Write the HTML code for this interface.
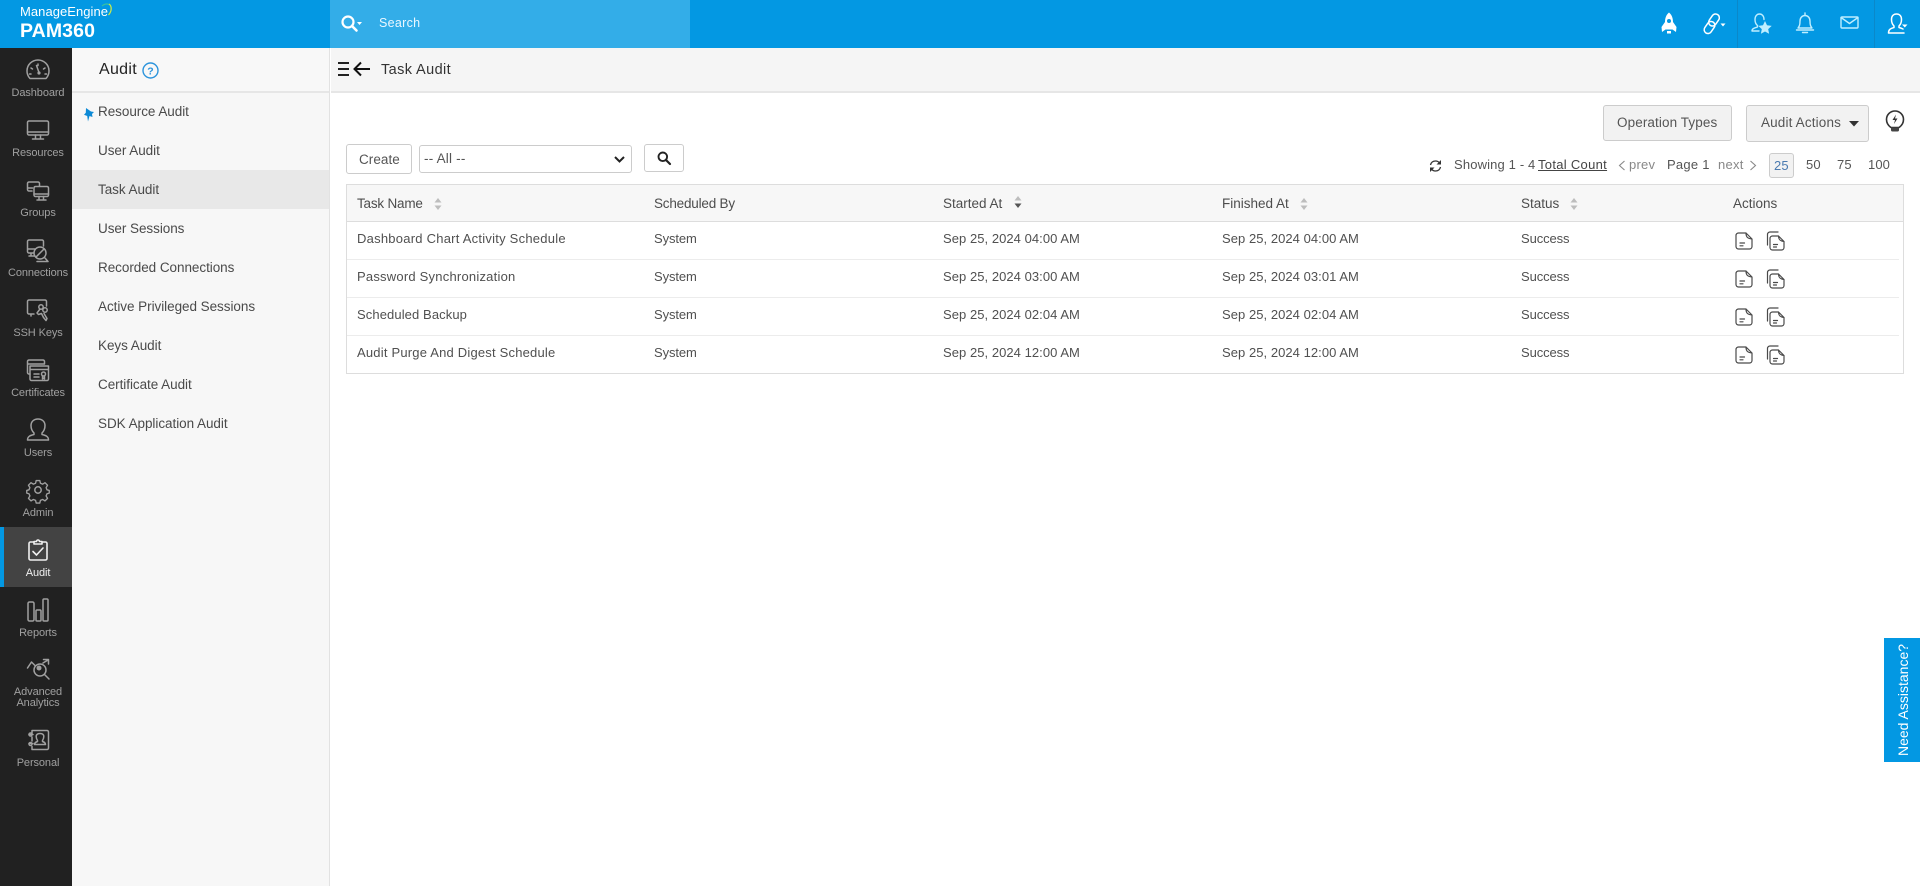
<!DOCTYPE html>
<html><head><meta charset="utf-8"><title>Task Audit - PAM360</title>
<style>
*{box-sizing:border-box}
html,body{margin:0;padding:0;width:1920px;height:886px;overflow:hidden;background:#fff;font-family:"Liberation Sans",sans-serif;color:#444}
.a{position:absolute}
.t{position:absolute;white-space:nowrap;line-height:20px;height:20px;font-size:13.5px;letter-spacing:.2px;color:#4a4a4a}
svg{position:absolute;overflow:visible}
#top{left:0;top:0;width:1920px;height:48px;background:#0398e3}
#srch{left:330px;top:0;width:360px;height:48px;background:#33ade8}
#rail{left:0;top:48px;width:72px;height:838px;background:#212121}
#act{left:0;top:527px;width:72px;height:60px;background:#434343;border-left:4px solid #0398e3}
#sub{left:72px;top:48px;width:258px;height:838px;background:#f7f7f7;border-right:1px solid #e2e2e2}
#subh{left:72px;top:48px;width:257px;height:45px;border-bottom:2px solid #e6e6e6;background:#f8f8f8}
#sel{left:72px;top:170px;width:257px;height:39px;background:#e8e8e8}
#bar{left:331px;top:48px;width:1589px;height:45px;background:#f5f5f5;border-bottom:2px solid #e6e6e6}
.rl{position:absolute;left:4px;width:68px;text-align:center;font-size:11px;letter-spacing:-.1px;line-height:12px;color:#a0a0a0}
.m{left:98px;font-size:13.5px;letter-spacing:-.05px;color:#4a4a4a}
.btn{position:absolute;background:#f2f2f2;border:1px solid #ccc;border-radius:3px}
.wb{position:absolute;background:#fff;border:1px solid #ccc;border-radius:3px}
#tbl{left:346px;top:184px;width:1558px;height:190px;border:1px solid #ddd;border-top:1px solid #ddd}
#th{left:347px;top:185px;width:1556px;height:37px;background:#f7f7f7;border-bottom:1px solid #ddd}
.l{position:absolute;left:347px;width:1552px;height:1px;background:#ececec}
.h{color:#4d4d4d;letter-spacing:0}
.r{letter-spacing:.28px;font-size:13px;color:#505050}
.d{letter-spacing:.05px}
.s{letter-spacing:-.1px}
#na{left:1884px;top:638px;width:36px;height:124px;background:#0398e3}
#nat{position:absolute;left:1903px;top:700px;width:124px;height:20px;margin:-10px 0 0 -62px;transform:rotate(-90deg);text-align:center;color:#fff;font-size:14px;line-height:20px;white-space:nowrap}
.ri{fill:none;stroke:#a0a0a0;stroke-width:1.5;stroke-linecap:round;stroke-linejoin:round}
.wi{fill:none;stroke:#fff;stroke-width:1.5;stroke-linecap:round;stroke-linejoin:round}
.ci{fill:none;stroke:#bfeeff;stroke-width:1.4;stroke-linecap:round;stroke-linejoin:round}
</style></head><body>
<svg width="0" height="0" style="position:absolute"><defs>
<symbol id="doc" viewBox="0 0 18 18"><path d="M3.500 1h7.500l6 6v7.500a2.500 2.500 0 0 1-2.500 2.500h-11A2.500 2.500 0 0 1 1 14.500v-11A2.500 2.500 0 0 1 3.500 1zM11 1c0 3.500 1 5.500 6 6M5 11h4.500M5 13.800h3" fill="none" stroke="#4a4a4a" stroke-width="1.200" stroke-linecap="round" stroke-linejoin="round"/></symbol>
<symbol id="doc2" viewBox="0 0 20 20"><path d="M6.500 5h6l5.500 5.500v6a2.500 2.500 0 0 1-2.500 2.500h-9A2.500 2.500 0 0 1 4 16.500V7.500A2.500 2.500 0 0 1 6.500 5zM12.500 5c0 3 1 5 5.500 5.500M7.500 13.500h4M7.500 16h3M1.500 14V3.500A2.500 2.500 0 0 1 4 1h8" fill="none" stroke="#4a4a4a" stroke-width="1.200" stroke-linecap="round" stroke-linejoin="round"/></symbol>
<symbol id="sort" viewBox="0 0 8 12"><path d="M4 0l3.500 4.500h-7zM4 12l3.500-4.500h-7z" fill="#bdbdbd"/></symbol>
</defs></svg>

<div id="top" class="a"></div>
<div id="srch" class="a"></div>
<div class="t" style="left:20px;top:2px;color:#fff;font-size:13px;letter-spacing:.05px">ManageEngine</div>
<div class="t" style="left:20px;top:21px;color:#fff;font-size:19.500px;font-weight:bold;letter-spacing:.1px">PAM360</div>
<svg style="left:100px;top:3px" width="16" height="14" viewBox="0 0 16 14"><path d="M2 3C4 1 7 .5 9 1.500" fill="none" stroke="#39c1a0" stroke-width="1.200"/><path d="M9 1c3 2 3 7-.5 11" fill="none" stroke="#c9ea4b" stroke-width="1.300"/></svg>
<svg style="left:340px;top:14px" width="24" height="20" viewBox="0 0 24 20"><circle cx="8" cy="8" r="5.500" fill="none" stroke="#fff" stroke-width="2.200"/><path d="M12 12l4.500 4.500" stroke="#fff" stroke-width="2.600" stroke-linecap="round"/><path d="M17 8h5l-2.500 3z" fill="#fff"/></svg>
<div class="t" style="left:379px;top:13px;color:#eaf7ff;font-size:12.500px;letter-spacing:.3px">Search</div>

<!-- top icons -->
<svg style="left:1659px;top:12px" width="20" height="22" viewBox="0 0 20 22"><path d="M10 .5c3 2.500 4 6 4 9.500l3.500 5-.5 5-3.500-2.500h-7L3 20l-.5-5L6 10c0-3.500 1-7 4-9.500z" fill="#fff"/><circle cx="10" cy="9" r="2" fill="#0398e3"/><path d="M8 19h4v2.500H8z" fill="#fff"/></svg>
<svg style="left:1703px;top:13px" width="24" height="22" viewBox="0 0 24 22"><g class="wi" stroke-width="1.700"><rect x="-3.800" y="-6.500" width="7.600" height="13" rx="3.800" transform="translate(6.500 14.500) rotate(35)"/><rect x="-3.800" y="-6.500" width="7.600" height="13" rx="3.800" transform="translate(11 7) rotate(35)"/></g><path d="M17.500 10.500h5l-2.500 3z" fill="#fff"/></svg>
<div class="a" style="left:1737px;top:0;width:1px;height:48px;background:#0b88c9"></div>
<svg style="left:1750px;top:13px" width="22" height="22" viewBox="0 0 22 22"><g class="ci"><path d="M7.500 12.500C5.500 11 5 8.500 5 6.500 5 3 7 1 9.500 1S14 3 14 6.500M7.500 12.500v1.500C4.500 15 2 15.500 2 18h7"/></g><path d="M15 8l2 4.300 4.700.6-3.500 3.200.9 4.700-4.100-2.300-4.100 2.300.9-4.700-3.500-3.200 4.700-.6z" fill="#bfeeff"/></svg>
<svg style="left:1795px;top:12px" width="20" height="22" viewBox="0 0 20 22"><g class="ci"><path d="M3 16c1.500-2 2-3 2-7 0-3 2-5.500 5-5.500S15 6 15 9c0 4 .5 5 2 7zM10 1v2.500M1.500 18h17M7.500 20.500h5"/></g></svg>
<svg style="left:1840px;top:15px" width="20" height="16" viewBox="0 0 20 16"><g class="ci"><rect x="1" y="2" width="17" height="11" rx="1"/><path d="M1 2.500l8.500 6 8.500-6"/></g></svg>
<div class="a" style="left:1874px;top:0;width:1px;height:48px;background:#0b88c9"></div>
<svg style="left:1887px;top:13px" width="24" height="22" viewBox="0 0 24 22"><g class="wi" stroke-width="1.700"><path d="M7 13C5 11 4.500 8.500 4.500 6.500 4.500 3 6.500 1 9.500 1s5 2 5 5.500c0 2-.5 4.500-2.500 6.500v1.500c2 .5 3 1 4 1.500M7 13v1.500C4 15.500 1.500 16 1.500 20H17"/></g><path d="M15 11.500h5.500l-2.700 3z" fill="#fff"/></svg>

<!-- rail -->
<div id="rail" class="a"></div>
<div id="act" class="a"></div>
<div class="rl" style="top:87px">Dashboard</div>
<div class="rl" style="top:147px">Resources</div>
<div class="rl" style="top:207px">Groups</div>
<div class="rl" style="top:267px">Connections</div>
<div class="rl" style="top:327px">SSH Keys</div>
<div class="rl" style="top:387px">Certificates</div>
<div class="rl" style="top:447px">Users</div>
<div class="rl" style="top:507px">Admin</div>
<div class="rl" style="top:567px;color:#f0f0f0">Audit</div>
<div class="rl" style="top:627px">Reports</div>
<div class="rl" style="top:687px;line-height:10.500px">Advanced<br>Analytics</div>
<div class="rl" style="top:757px">Personal</div>

<svg style="left:26px;top:60px" width="24" height="20" viewBox="0 0 24 20"><g class="ri"><path d="M4 18.500a11 11 0 1 1 16 0z"/><path d="M12 4v1.500M5 8l1.500 1M19 8l-1.500 1M3.500 14H5M20.500 14H19M10.500 5.500l2.500 7"/></g><circle cx="13" cy="13" r="1.600" fill="#a0a0a0"/></svg>
<svg style="left:26px;top:120px" width="24" height="20" viewBox="0 0 24 20"><g class="ri"><rect x="1.500" y="1" width="21" height="14" rx="1.500"/><path d="M1.500 12h21M9.500 15v3.500M14.500 15v3.500M6.500 19h11"/></g></svg>
<svg style="left:26px;top:180px" width="24" height="22" viewBox="0 0 24 22"><g class="ri"><path d="M6 11H3a1.500 1.500 0 0 1-1.500-1.500v-6A1.500 1.500 0 0 1 3 2h9a1.500 1.500 0 0 1 1.500 1.500V6M1.500 8h5"/><rect x="8" y="6.500" width="14.500" height="10" rx="1.500"/><path d="M8 14h14.500M13 16.500v3M17.500 16.500v3M11 20h9"/></g></svg>
<svg style="left:26px;top:238px" width="24" height="24" viewBox="0 0 24 24"><g class="ri"><path d="M8 15H3a1.500 1.500 0 0 1-1.500-1.500v-10A1.500 1.500 0 0 1 3 2h13a1.500 1.500 0 0 1 1.500 1.500V8M1.500 11H9M5 15v2.500M3 18h6"/><circle cx="14" cy="15" r="6"/><path d="M10 19L18 11M19 20l3 3.500H11"/></g></svg>
<svg style="left:26px;top:298px" width="24" height="24" viewBox="0 0 24 24"><g class="ri"><path d="M8 16H3a1.500 1.500 0 0 1-1.500-1.500v-11A1.500 1.500 0 0 1 3 2h16a1.500 1.500 0 0 1 1.500 1.500V8M5 16v2"/><circle cx="15" cy="9" r="2.200"/><circle cx="19" cy="12" r="2.200"/><path d="M14 11l-3 4 1.500 1.500 3-1 2 4 2.500 3 1-2-3-5"/></g></svg>
<svg style="left:26px;top:358px" width="24" height="24" viewBox="0 0 24 24"><g class="ri"><path d="M4 16H3a1.500 1.500 0 0 1-1.500-1.500v-11A1.500 1.500 0 0 1 3 2h14a1.500 1.500 0 0 1 1.500 1.500V6M1.500 6h17"/><path d="M4 8h18.500v13a1.500 1.500 0 0 1-1.500 1.500H5.500A1.500 1.500 0 0 1 4 21zM4 11.500h18.500M8 16h5M8 19h5"/><circle cx="17.500" cy="16" r="2"/><path d="M16.500 18v3l1-1 1 1v-3"/></g></svg>
<svg style="left:26px;top:418px" width="24" height="24" viewBox="0 0 24 24"><g class="ri" stroke-width="1.700"><path d="M8 15c-2-2-3-5-3-7.500C5 3.500 8 1 12 1s7 2.500 7 6.500c0 2.500-1 5.500-3 7.500v1.500c4 1 6.500 2 6.500 5.500h-21c0-3.500 2.500-4.500 6.500-5.500z"/></g></svg>
<svg style="left:26px;top:478px" width="24" height="24" viewBox="0 0 24 24"><g class="ri"><circle cx="12" cy="12" r="3.200"/><path d="M10 1.500h4l.7 3 2.400 1 2.700-1.600 2.800 2.800-1.600 2.700 1 2.400 2.500.7v3l-2.500.7-1 2.400 1.600 2.700-2.800 2.800-2.700-1.600-2.400 1-.7 3h-4l-.7-3-2.400-1-2.700 1.600-2.800-2.800 1.600-2.700-1-2.400-2.500-.7v-3l2.500-.7 1-2.400-1.600-2.700 2.800-2.800 2.700 1.600 2.400-1z" transform="translate(1.200 1.200) scale(.9)"/></g></svg>
<svg style="left:28px;top:538px" width="20" height="24" viewBox="0 0 20 24"><g fill="none" stroke="#f0f0f0" stroke-width="1.600" stroke-linecap="round" stroke-linejoin="round"><path d="M6 4H2.500A1.500 1.500 0 0 0 1 5.500v15A1.500 1.500 0 0 0 2.500 22h15a1.500 1.500 0 0 0 1.500-1.500v-15A1.500 1.500 0 0 0 17.500 4H14M6 6V3.500h2.500a1.500 1.500 0 0 1 3 0H14V6zM5 13.500l3.500 3.500L15 10"/></g></svg>
<svg style="left:26px;top:598px" width="24" height="24" viewBox="0 0 24 24"><g class="ri"><rect x="2" y="4" width="6" height="19" rx="1.500"/><rect x="10" y="12" width="5" height="11" rx="1"/><rect x="17" y="1" width="5" height="22" rx="1"/></g></svg>
<svg style="left:26px;top:658px" width="24" height="24" viewBox="0 0 24 24"><g class="ri" stroke-width="1.700"><path d="M1.500 10L5.500 4l3.500 3.500M17 5l5-3M17.500 1.500H22.500V6"/><circle cx="14" cy="12" r="6"/><path d="M18.500 16.500l4.500 4.500"/></g><circle cx="13" cy="10" r="2.500" fill="#a0a0a0"/></svg>
<svg style="left:28px;top:729px" width="22" height="22" viewBox="0 0 22 22"><g class="ri"><path d="M4 1.500h15a1.500 1.500 0 0 1 1.500 1.500v16a1.500 1.500 0 0 1-1.500 1.500H4v-3M4 12V8M4 4.500v-3"/><path d="M1 5.500h4M1 14.500h4"/><circle cx="2.500" cy="5.500" r="1.500"/><circle cx="2.500" cy="15" r="1.500"/><path d="M9.500 11.500c-1-1.500-1.300-3-1.300-4C8.200 5.500 9.500 4.500 12 4.500s3.800 1 3.800 3c0 1-.3 2.500-1.300 4v1c1.500.5 3 1 3 3h-11c0-2 1.500-2.500 3-3z"/></g></svg>

<!-- sub panel -->
<div id="sub" class="a"></div>
<div id="subh" class="a"></div>
<div id="sel" class="a"></div>
<div class="t" style="left:99px;top:60px;font-size:16px;color:#222;letter-spacing:.3px">Audit</div>
<svg style="left:142px;top:62px" width="17" height="17" viewBox="0 0 17 17"><circle cx="8.500" cy="8.500" r="7.500" fill="none" stroke="#2c94dc" stroke-width="1.400"/><text x="8.500" y="12.300" text-anchor="middle" font-family="Liberation Sans" font-weight="bold" font-size="10.500" fill="#2c94dc">?</text></svg>
<svg style="left:83px;top:108px" width="11" height="14" viewBox="0 0 11 14"><path d="M3 0l5 3.500 3 .5-2 2 .5 3-3-1L5 13.500 4.200 8 1 6.800l1.800-2z" fill="#0e8ad6"/></svg>
<div class="t m" style="top:102px">Resource Audit</div>
<div class="t m" style="top:141px">User Audit</div>
<div class="t m" style="top:180px">Task Audit</div>
<div class="t m" style="top:219px">User Sessions</div>
<div class="t m" style="top:258px">Recorded Connections</div>
<div class="t m" style="top:297px">Active Privileged Sessions</div>
<div class="t m" style="top:336px">Keys Audit</div>
<div class="t m" style="top:375px">Certificate Audit</div>
<div class="t m" style="top:414px">SDK Application Audit</div>

<!-- title bar -->
<div id="bar" class="a"></div>
<svg style="left:337px;top:60px" width="36" height="18" viewBox="0 0 36 18"><path d="M1 3h11M1 9h11M1 15h11" stroke="#222" stroke-width="2"/><path d="M18 9h15M24 2.500L17.500 9l6.500 6.500" fill="none" stroke="#111" stroke-width="2"/></svg>
<div class="t" style="left:381px;top:60px;font-size:14.500px;letter-spacing:.4px;color:#333">Task Audit</div>

<!-- buttons -->
<div class="btn" style="left:1603px;top:105px;width:129px;height:36px"></div>
<div class="t" style="left:1617px;top:113px;letter-spacing:.1px;color:#555">Operation Types</div>
<div class="btn" style="left:1746px;top:105px;width:123px;height:37px"></div>
<div class="t" style="left:1761px;top:113px;letter-spacing:.15px;color:#555">Audit Actions</div>
<svg style="left:1849px;top:121px" width="10" height="6" viewBox="0 0 10 6"><path d="M0 0h10L5 5.500z" fill="#333"/></svg>
<svg style="left:1885px;top:109px" width="20" height="23" viewBox="0 0 20 23"><path d="M6 18.500C3.500 16.800 1.500 14.500 1.500 10.500a8.500 8.500 0 0 1 17 0c0 4-2 6.300-4.500 8z" fill="none" stroke="#333" stroke-width="1.600"/><path d="M6 18.500h8V21a1.500 1.500 0 0 1-1.500 1.500h-5A1.500 1.500 0 0 1 6 21z" fill="#444"/><path d="M11 5.500L7.500 11H10l-1 4 3.500-5.500H10z" fill="#333"/></svg>

<div class="wb" style="left:346px;top:144px;width:66px;height:30px"></div>
<div class="t" style="left:359px;top:150px;letter-spacing:.05px;color:#555">Create</div>
<div class="wb" style="left:419px;top:145px;width:213px;height:28px"></div>
<div class="t" style="left:424px;top:149px;color:#555">-- All --</div>
<svg style="left:614px;top:156px" width="11" height="7" viewBox="0 0 11 7"><path d="M1 1l4.500 4.500L10 1" fill="none" stroke="#222" stroke-width="2"/></svg>
<div class="wb" style="left:644px;top:144px;width:40px;height:28px"></div>
<svg style="left:657px;top:151px" width="14" height="14" viewBox="0 0 14 14"><circle cx="5.800" cy="5.800" r="4.300" fill="none" stroke="#222" stroke-width="1.900"/><path d="M9 9l4 4" stroke="#222" stroke-width="2.200" stroke-linecap="round"/></svg>

<!-- pagination -->
<svg style="left:1429px;top:159px" width="13" height="14" viewBox="0 0 13 14"><path d="M1.500 6C2 3.500 4 2 6.500 2c2 0 3.500 1 4.500 2.500M11.500 8c-.5 2.500-2.500 4-5 4-2 0-3.500-1-4.500-2.500" fill="none" stroke="#333" stroke-width="1.300"/><path d="M12 1v4.500H7.500zM1 13V8.500h4.500z" fill="#333"/></svg>
<div class="t" style="left:1454px;top:155px;font-size:13px;letter-spacing:.15px;color:#555">Showing 1 - 4</div>
<div class="t" style="left:1538px;top:155px;font-size:13px;letter-spacing:.3px;color:#444;text-decoration:underline">Total Count</div>
<svg style="left:1618px;top:160px" width="8" height="11" viewBox="0 0 8 11"><path d="M6.500 1L1.500 5.500l5 4.500" fill="none" stroke="#888" stroke-width="1.100"/></svg>
<div class="t" style="left:1629px;top:155px;font-size:13px;letter-spacing:.25px;color:#888">prev</div>
<div class="t" style="left:1667px;top:155px;font-size:13px;letter-spacing:.25px;color:#555">Page 1</div>
<div class="t" style="left:1718px;top:155px;font-size:13px;letter-spacing:.25px;color:#888">next</div>
<svg style="left:1749px;top:160px" width="8" height="11" viewBox="0 0 8 11"><path d="M1.500 1l5 4.500-5 4.500" fill="none" stroke="#888" stroke-width="1.100"/></svg>
<div class="a" style="left:1769px;top:153px;width:25px;height:25px;background:#f2f2f2;border:1px solid #ccc;border-radius:3px"></div>
<div class="t" style="left:1774px;top:156px;font-size:13px;letter-spacing:.1px;color:#4a7ab0">25</div>
<div class="t" style="left:1806px;top:155px;font-size:13px;letter-spacing:.1px;color:#555">50</div>
<div class="t" style="left:1837px;top:155px;font-size:13px;letter-spacing:.1px;color:#555">75</div>
<div class="t" style="left:1868px;top:155px;font-size:13px;letter-spacing:.1px;color:#555">100</div>

<!-- table -->
<div id="tbl" class="a"></div>
<div id="th" class="a"></div>
<div class="l" style="top:259px"></div>
<div class="l" style="top:297px"></div>
<div class="l" style="top:335px"></div>
<div class="t h" style="left:357px;top:194px;letter-spacing:-.2px">Task Name</div>
<svg style="left:434px;top:198px" width="8" height="12"><use href="#sort" width="8" height="12"/></svg>
<div class="t h" style="left:654px;top:194px;letter-spacing:-.2px">Scheduled By</div>
<div class="t h" style="left:943px;top:194px">Started At</div>
<svg style="left:1014px;top:196px" width="8" height="12" viewBox="0 0 8 12"><path d="M4 0l3.500 4.500h-7z" fill="#bdbdbd"/><path d="M4 12l3.500-4.500h-7z" fill="#555"/></svg>
<div class="t h" style="left:1222px;top:194px">Finished At</div>
<svg style="left:1300px;top:198px" width="8" height="12"><use href="#sort" width="8" height="12"/></svg>
<div class="t h" style="left:1521px;top:194px">Status</div>
<svg style="left:1570px;top:198px" width="8" height="12"><use href="#sort" width="8" height="12"/></svg>
<div class="t h" style="left:1733px;top:194px">Actions</div>

<div class="t r" style="left:357px;top:229px;letter-spacing:.24px">Dashboard Chart Activity Schedule</div>
<div class="t r s" style="left:654px;top:229px">System</div>
<div class="t r d" style="left:943px;top:229px">Sep 25, 2024 04:00 AM</div>
<div class="t r d" style="left:1222px;top:229px">Sep 25, 2024 04:00 AM</div>
<div class="t r s" style="left:1521px;top:229px">Success</div>
<svg style="left:1735px;top:232px" width="18" height="18"><use href="#doc" width="18" height="18"/></svg>
<svg style="left:1766px;top:231px" width="20" height="20"><use href="#doc2" width="20" height="20"/></svg>

<div class="t r" style="left:357px;top:267px;letter-spacing:.22px">Password Synchronization</div>
<div class="t r s" style="left:654px;top:267px">System</div>
<div class="t r d" style="left:943px;top:267px">Sep 25, 2024 03:00 AM</div>
<div class="t r d" style="left:1222px;top:267px">Sep 25, 2024 03:01 AM</div>
<div class="t r s" style="left:1521px;top:267px">Success</div>
<svg style="left:1735px;top:270px" width="18" height="18"><use href="#doc" width="18" height="18"/></svg>
<svg style="left:1766px;top:269px" width="20" height="20"><use href="#doc2" width="20" height="20"/></svg>

<div class="t r" style="left:357px;top:305px;letter-spacing:.1px">Scheduled Backup</div>
<div class="t r s" style="left:654px;top:305px">System</div>
<div class="t r d" style="left:943px;top:305px">Sep 25, 2024 02:04 AM</div>
<div class="t r d" style="left:1222px;top:305px">Sep 25, 2024 02:04 AM</div>
<div class="t r s" style="left:1521px;top:305px">Success</div>
<svg style="left:1735px;top:308px" width="18" height="18"><use href="#doc" width="18" height="18"/></svg>
<svg style="left:1766px;top:307px" width="20" height="20"><use href="#doc2" width="20" height="20"/></svg>

<div class="t r" style="left:357px;top:343px;letter-spacing:.2px">Audit Purge And Digest Schedule</div>
<div class="t r s" style="left:654px;top:343px">System</div>
<div class="t r d" style="left:943px;top:343px">Sep 25, 2024 12:00 AM</div>
<div class="t r d" style="left:1222px;top:343px">Sep 25, 2024 12:00 AM</div>
<div class="t r s" style="left:1521px;top:343px">Success</div>
<svg style="left:1735px;top:346px" width="18" height="18"><use href="#doc" width="18" height="18"/></svg>
<svg style="left:1766px;top:345px" width="20" height="20"><use href="#doc2" width="20" height="20"/></svg>

<div id="na" class="a"></div>
<div id="nat">Need Assistance?</div>
</body></html>
